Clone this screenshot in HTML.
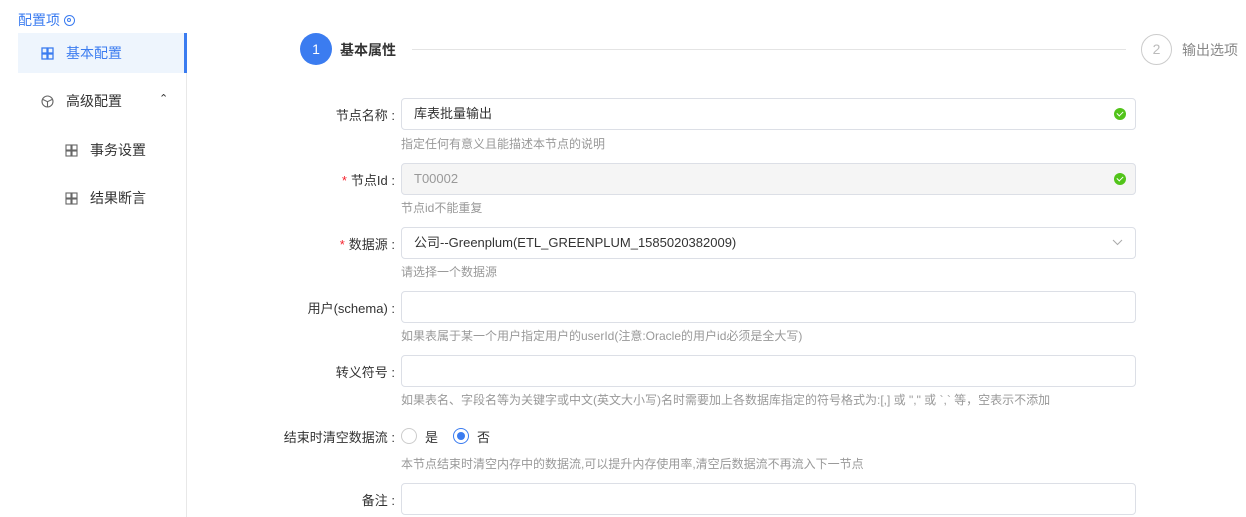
<!DOCTYPE html>
<html><head><meta charset="utf-8"><style>
*{box-sizing:border-box;margin:0;padding:0}
body{width:1246px;height:517px;overflow:hidden;background:#fff;font-family:"Liberation Sans","Noto Sans CJK SC",sans-serif;font-size:13px;color:#333;position:relative}
.a{position:absolute}
.side{left:186px;top:33px;width:1px;height:484px;background:#e8e8e8}
.it{left:18px;width:168px;height:40px;line-height:40px;font-size:14px;color:#333}
.lbl{right:851px;text-align:right;white-space:nowrap;color:#333}
.inp{left:401px;width:735px;height:32px;border:1px solid #dcdfe6;border-radius:4px;line-height:30px;padding-left:12px;color:#333}
.hint{left:401px;font-size:12px;color:#999;white-space:nowrap}
.req{color:#f5222d;margin-right:4px}
.ok{position:absolute;right:9px;top:9px;width:12px;height:12px;border-radius:50%;background:#52c41a}
.ok:after{content:"";position:absolute;left:3px;top:2.5px;width:5px;height:3px;border-left:1.5px solid #fff;border-bottom:1.5px solid #fff;transform:rotate(-45deg)}
</style></head><body>
<div class="a" style="left:18px;top:10px;color:#3b7cf0;font-size:14px">配置项 <span style="display:inline-block;width:11px;height:11px;border:1.5px solid #3b7cf0;border-radius:50%;position:relative;top:1px"><span style="position:absolute;left:2px;top:2px;width:4px;height:4px;border:1.2px solid #3b7cf0;border-radius:50%"></span></span></div>
<div class="a side"></div>
<div class="a it" style="top:33px;background:#eef5fd;color:#3b7cf0;border-right:3px solid #3b7cf0;width:169px">
<svg class="a" style="left:23px;top:14px" width="13" height="13" viewBox="0 0 13 13" fill="none" stroke="#3b7cf0" stroke-width="1.3"><rect x="1" y="1" width="5" height="5"/><rect x="7" y="1" width="5" height="5"/><rect x="1" y="7" width="5" height="5"/><rect x="7" y="7" width="5" height="5"/></svg>
<span class="a" style="left:48px">基本配置</span></div>
<div class="a it" style="top:81px">
<svg class="a" style="left:23px;top:14px" width="13" height="13" viewBox="0 0 13 13" fill="none" stroke="#666" stroke-width="1.1"><circle cx="6.5" cy="6.5" r="5.5"/><path d="M2 4.5l4.5 2.2 4.5-2.2M6.5 6.7v5.3"/></svg>
<span class="a" style="left:48px">高级配置</span><span class="a" style="left:141px;top:-2px;font-size:11px">&#8963;</span></div>
<div class="a it" style="top:130px">
<svg class="a" style="left:47px;top:14px" width="13" height="13" viewBox="0 0 13 13" fill="none" stroke="#666" stroke-width="1.1"><rect x="1" y="1" width="5" height="5"/><rect x="7" y="1" width="5" height="5"/><rect x="1" y="7" width="5" height="5"/><rect x="7" y="7" width="5" height="5"/></svg>
<span class="a" style="left:72px">事务设置</span></div>
<div class="a it" style="top:178px">
<svg class="a" style="left:47px;top:14px" width="13" height="13" viewBox="0 0 13 13" fill="none" stroke="#666" stroke-width="1.1"><rect x="1" y="1" width="5" height="5"/><rect x="7" y="1" width="5" height="5"/><rect x="1" y="7" width="5" height="5"/><rect x="7" y="7" width="5" height="5"/></svg>
<span class="a" style="left:72px">结果断言</span></div>

<div class="a" style="left:300px;top:33px;width:32px;height:32px;border-radius:50%;background:#3b7cf0;color:#fff;text-align:center;line-height:32px;font-size:14px">1</div>
<div class="a" style="left:340px;top:40px;font-size:14px;font-weight:bold;color:#333">基本属性</div>
<div class="a" style="left:412px;top:49px;width:714px;height:1px;background:#e4e4e4"></div>
<div class="a" style="left:1141px;top:34px;width:31px;height:31px;border-radius:50%;border:1px solid #ccc;color:#bbb;text-align:center;line-height:29px;font-size:14px">2</div>
<div class="a" style="left:1182px;top:40px;font-size:14px;color:#888">输出选项</div>

<div class="a lbl" style="top:105px">节点名称 :</div>
<div class="a inp" style="top:98px">库表批量输出<span class="ok"></span></div>
<div class="a hint" style="top:135px">指定任何有意义且能描述本节点的说明</div>

<div class="a lbl" style="top:170px"><span class="req">*</span>节点Id :</div>
<div class="a inp" style="top:163px;background:#f5f5f5;color:#999">T00002<span class="ok"></span></div>
<div class="a hint" style="top:199px">节点id不能重复</div>

<div class="a lbl" style="top:234px"><span class="req">*</span>数据源 :</div>
<div class="a inp" style="top:227px">公司--Greenplum(ETL_GREENPLUM_1585020382009)<svg style="position:absolute;right:12px;top:11px" width="11" height="7" viewBox="0 0 11 7" fill="none" stroke="#aaa"><path d="M1 1l4.5 4.5L10 1"/></svg></div>
<div class="a hint" style="top:263px">请选择一个数据源</div>

<div class="a lbl" style="top:298px">用户(schema) :</div>
<div class="a inp" style="top:291px"></div>
<div class="a hint" style="top:327px">如果表属于某一个用户指定用户的userId(注意:Oracle的用户id必须是全大写)</div>

<div class="a lbl" style="top:362px">转义符号 :</div>
<div class="a inp" style="top:355px"></div>
<div class="a hint" style="top:391px">如果表名、字段名等为关键字或中文(英文大小写)名时需要加上各数据库指定的符号格式为:[,] 或 "," 或 `,` 等，空表示不添加</div>

<div class="a lbl" style="top:427px">结束时清空数据流 :</div>
<div class="a" style="left:401px;top:428px;width:16px;height:16px;border:1px solid #ccc;border-radius:50%"></div>
<div class="a" style="left:425px;top:427px">是</div>
<div class="a" style="left:453px;top:428px;width:16px;height:16px;border:1px solid #3b7cf0;border-radius:50%"><span style="position:absolute;left:3px;top:3px;width:8px;height:8px;border-radius:50%;background:#3b7cf0"></span></div>
<div class="a" style="left:477px;top:427px">否</div>
<div class="a hint" style="top:455px">本节点结束时清空内存中的数据流,可以提升内存使用率,清空后数据流不再流入下一节点</div>

<div class="a lbl" style="top:490px">备注 :</div>
<div class="a inp" style="top:483px;height:32px"></div>
</body></html>
